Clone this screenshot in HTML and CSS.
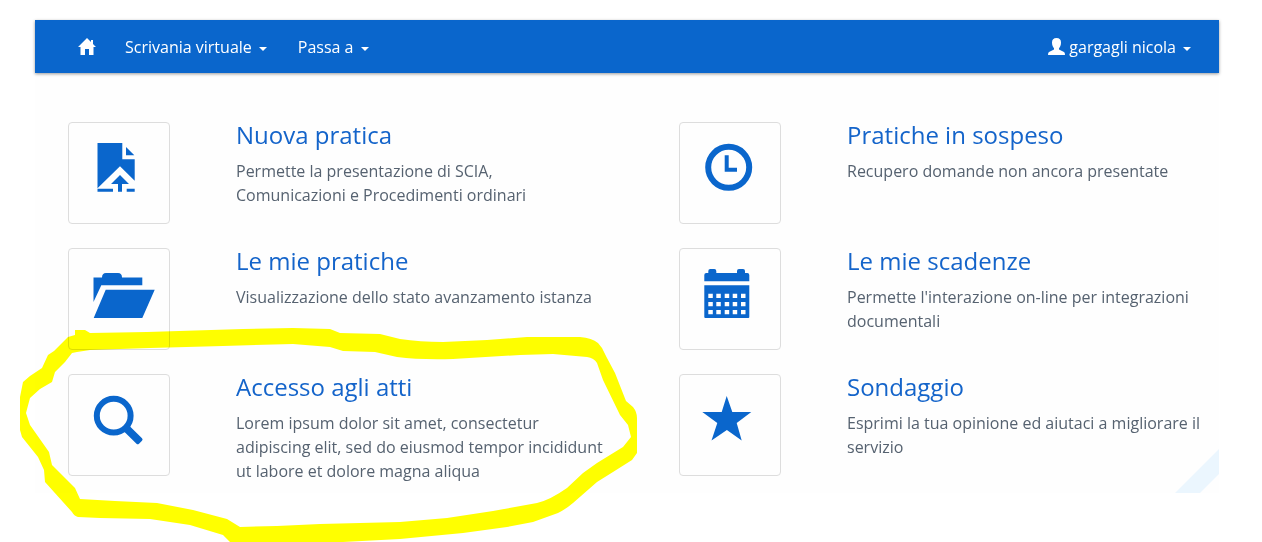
FILE: index.html
```html
<!DOCTYPE html>
<html lang="it">
<head>
<meta charset="utf-8">
<title>Scrivania virtuale</title>
<link rel="stylesheet" href="styles.css">
</head>
<body>
<div class="app">
  <nav class="navbar">
    <a class="nav-home" href="#" aria-label="Home">
      <svg width="18" height="17" viewBox="0 0 18 17"><path fill="currentColor" d="M9 0 13 4V2H15V6L18 9H15.500V17H11V11H7V17H2.500V9H0Z"/></svg>
    </a>
    <button class="nav-item" type="button">Scrivania virtuale<span class="caret"></span></button>
    <button class="nav-item" type="button">Passa a<span class="caret"></span></button>
    <button class="nav-item nav-user" type="button">
      <svg class="user-icon" width="17" height="17" viewBox="0 0 17 17"><path fill="currentColor" d="M8.500 0C11.500 0 13 1.500 13 4.500 13 7.500 12 9 11 10.200V11.500L16 14Q17 14.500 17 17H0Q0 14.500 1 14L6 11.500V10.200C5 9 4 7.500 4 4.500 4 1.500 5.500 0 8.500 0Z"/></svg>gargagli nicola<span class="caret"></span>
    </button>
  </nav>
  <main class="services">
    <article class="service">
      <a class="tile" href="#" aria-label="Nuova pratica"><svg viewBox="1 1 100 100"><path d="M29.500 21H54.300V37.300H66.700V58.700L52 44.300 29.500 66.300ZM58 25 66.300 33.300H58ZM52 53 61 62H54V69.700H50V62H43ZM29.500 66.700H45V69.700H29.500ZM58.700 66.700H66.700V69.700H58.700Z"/></svg></a>
      <div class="info"><h2><a href="#">Nuova pratica</a></h2><p>Permette la presentazione di SCIA, Comunicazioni e Procedimenti ordinari</p></div>
    </article>
    <article class="service">
      <a class="tile" href="#" aria-label="Pratiche in sospeso"><svg viewBox="1 1 100 100"><circle class="ring" cx="49.700" cy="45.300" r="20.500"/><path d="M45.700 33.300H49.700V45.700H58V49.700H45.700Z"/></svg></a>
      <div class="info"><h2><a href="#">Pratiche in sospeso</a></h2><p>Recupero domande non ancora presentate</p></div>
    </article>
    <article class="service">
      <a class="tile" href="#" aria-label="Le mie pratiche"><svg viewBox="1 1 100 100"><path d="M25.500 29.500H34Q34 25 38 25H50Q54 25 54 29.500H74.300V37.300H33.300L25.500 54ZM37.700 41.700H86.700L74.300 70H25.700Z"/></svg></a>
      <div class="info"><h2><a href="#">Le mie pratiche</a></h2><p>Visualizzazione dello stato avanzamento istanza</p></div>
    </article>
    <article class="service">
      <a class="tile" href="#" aria-label="Le mie scadenze"><svg viewBox="1 1 100 100"><path fill-rule="evenodd" d="M25.300 33.300V27Q25.300 25 27.300 25H29.300V23Q29.300 21 31.300 21H35.300Q37.300 21 37.300 23V25H58V23Q58 21 60 21H64Q66 21 66 23V25H68.300Q70.300 25 70.300 27V33.300ZM25.300 37.300H70.300V69Q70.300 70 69.300 70H26.300Q25.300 70 25.300 69ZM29.300 45.700v4.300h4.500v-4.300ZM37.300 45.700v4.300h4.500v-4.300ZM45.700 45.700v4.300h4.500v-4.300ZM53.700 45.700v4.300h4.500v-4.300ZM62 45.700v4.300h4.500v-4.300ZM29.300 54v4.300h4.500v-4.300ZM37.300 54v4.300h4.500v-4.300ZM45.700 54v4.300h4.500v-4.300ZM53.700 54v4.300h4.500v-4.300ZM62 54v4.300h4.500v-4.300ZM29.300 62v4.300h4.500v-4.300ZM37.300 62v4.300h4.500v-4.300ZM45.700 62v4.300h4.500v-4.300ZM53.700 62v4.300h4.500v-4.300ZM62 62v4.300h4.500v-4.300Z"/></svg></a>
      <div class="info"><h2><a href="#">Le mie scadenze</a></h2><p>Permette l'interazione on-line per integrazioni documentali</p></div>
    </article>
    <article class="service">
      <a class="tile" href="#" aria-label="Accesso agli atti"><svg viewBox="1 1 100 100"><circle class="ring" cx="45.700" cy="41.700" r="16.900"/><path d="M54.500 56 60 50.500 74 64.300Q75.200 65.500 74 66.700L71 69.700Q69.700 71 68.500 69.700Z"/></svg></a>
      <div class="info"><h2><a href="#">Accesso agli atti</a></h2><p>Lorem ipsum dolor sit amet, consectetur adipiscing elit, sed do eiusmod tempor incididunt ut labore et dolore magna aliqua</p></div>
    </article>
    <article class="service">
      <a class="tile" href="#" aria-label="Sondaggio"><svg viewBox="1 1 100 100"><path d="M47.700 22 53.300 38H72.300L57.700 49 62.700 66.500 47.900 56 32.500 66.500 38.300 49 23.300 38H42.700Z"/></svg></a>
      <div class="info"><h2><a href="#">Sondaggio</a></h2><p>Esprimi la tua opinione ed aiutaci a migliorare il servizio</p></div>
    </article>
    <svg class="corner" width="44" height="44" viewBox="0 0 44 44"><path d="M0 44 44 0V25L25 44Z"/></svg>
  </main>
</div>
<svg class="marker" width="640" height="542" viewBox="0 0 640 542" aria-hidden="true"><path fill-rule="evenodd" d="M75 330H85L90 333 147 332 243 329 293 328 330 329 340 333 380 334 400 339Q420 342 443 342L487 340 527 337H580Q592 338 598 343L602 348 607 358 615 373 626 401 633 407Q637 412 637 418V453L632 460 613 472 597 482 573 503Q566 509 558 513L533 522 507 527 463 533 400 539 343 542H230L223 535 190 525 150 519 100 518 78 517Q74 516 72 512L45 482 44 470 38 457 22 437 20 430V397L23 382 30 376 42 368 48 355 54 351 68 337 75 335ZM65 362 72 353 77 352 90 350 150 348 223 346 293 344 330 347 343 351 375 352 397 357Q420 360 453 359L520 355 553 354 587 357Q594 358 597 363L603 380 620 415 628 425 631 437 623 447 597 463 583 473 567 488Q550 500 537 503L493 511 447 518 400 522 320 524 277 526 240 527 227 519 193 510 157 503 115 501 80 499 75 488 52 465 49 452 30 425 26 413 30 398 40 389 52 382 55 372Z"/></svg>
</body>
</html>
```
FILE: styles.css
```css
* {
  box-sizing: border-box;
}

body {
  margin: 0;
  padding: 20px 43px 48px 35px;
  background: #fff;
  color: #566270;
  font: 16px/24px "Open Sans", sans-serif;
}

a {
  color: inherit;
  text-decoration: none;
}

.app {
  background: #fefefe;
}

.navbar {
  display: flex;
  align-items: center;
  height: 53px;
  padding: 0 28px 0 43px;
  background: #0a66cc;
  color: #fff;
  font-weight: 500;
  box-shadow: 0 1px 3px rgba(0, 0, 0, 0.4);
}

.nav-home {
  display: flex;
  margin-right: 29px;
}

.nav-item {
  display: flex;
  align-items: center;
  margin-right: 31px;
  padding: 0;
  border: 0;
  background: none;
  color: inherit;
  font: inherit;
}

.nav-user {
  margin: 0 0 0 auto;
}

.user-icon {
  margin-right: 4px;
}

.caret {
  margin: 4px 0 0 7px;
  border: 4px solid transparent;
  border-top-color: currentColor;
  border-bottom: 0;
}

.services {
  position: relative;
  display: grid;
  grid-template-columns: 611fr 540fr;
  row-gap: 24px;
  padding: 49px 0 10px 33px;
}

.service {
  display: flex;
  gap: 66px;
}

.tile {
  flex: none;
  width: 102px;
  height: 102px;
  border: 1px solid #ddd;
  border-radius: 4px;
  background: #fefefe;
}

.tile svg {
  display: block;
  fill: #0a66cc;
}

.tile .ring {
  fill: none;
  stroke: #0a66cc;
  stroke-width: 6px;
}

.info {
  flex: 1;
  max-width: 369px;
}

.info h2 {
  margin: 0 0 11px;
  color: #1464ca;
  font-size: 24px;
  font-weight: 400;
  line-height: 26px;
}

.info p {
  margin: 0;
}

.corner {
  position: absolute;
  right: 0;
  bottom: 0;
  fill: #ebf6fe;
}

.marker {
  position: absolute;
  top: 0;
  left: 0;
  fill: #ff0;
  mix-blend-mode: multiply;
  pointer-events: none;
}
```
